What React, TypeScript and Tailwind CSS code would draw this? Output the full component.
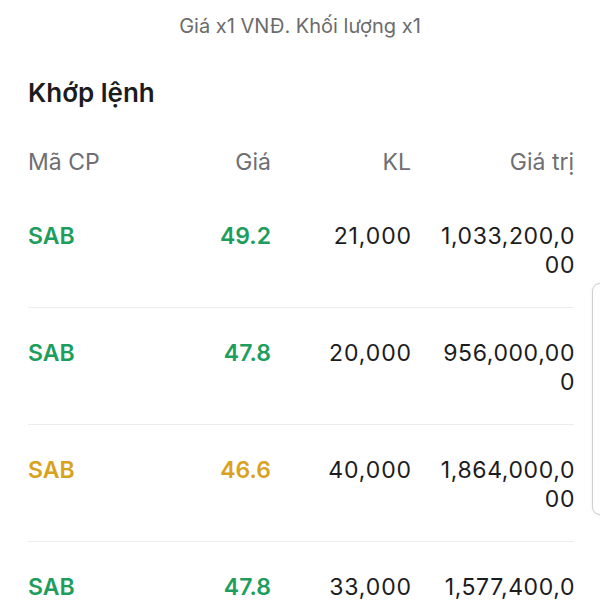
const rows = [
  { code: "SAB", price: "49.2", vol: "21,000", value: ["1,033,200,0", "00"], tone: "up" },
  { code: "SAB", price: "47.8", vol: "20,000", value: ["956,000,00", "0"], tone: "up" },
  { code: "SAB", price: "46.6", vol: "40,000", value: ["1,864,000,0", "00"], tone: "ref" },
  { code: "SAB", price: "47.8", vol: "33,000", value: ["1,577,400,0", "00"], tone: "up" },
];

const font = { fontFamily: "Inter, 'Noto Sans', sans-serif" };

export default function App() {
  return (
    <div className="relative w-[600px] h-[600px] overflow-hidden bg-white" style={font}>
      <p className="pt-[13px] text-center text-[20px] leading-[26px] text-[#6b6b6b]">
        Giá x1 VNĐ. Khối lượng x1
      </p>

      <div className="px-[28px] pr-[26px]">
        <h2 className="mt-[37px] text-[26px] leading-[34px] font-semibold text-[#1c1c1e]">
          Khớp lệnh
        </h2>

        <div className="mt-[38px] grid grid-cols-[1fr_100px_117px_140px] gap-x-[23px] pb-[14px] text-[23px] leading-[29px] text-[#6e6e73]">
          <span>Mã CP</span>
          <span className="text-right">Giá</span>
          <span className="text-right">KL</span>
          <span className="text-right">Giá trị</span>
        </div>

        {rows.map((r, i) => {
          const color = r.tone === "up" ? "text-[#1e9e5e]" : "text-[#d9a21e]";
          return (
            <div
              key={i}
              className="grid grid-cols-[1fr_100px_117px_140px] gap-x-[23px] pt-[31px] pb-[27px] border-b border-[#ececec] text-[23px] leading-[29px]"
            >
              <span className={`font-semibold ${color}`}>{r.code}</span>
              <span className={`text-right font-semibold ${color}`}>{r.price}</span>
              <span className="text-right text-[#1c1c1e] tracking-[0.9px] -mr-[1px]">{r.vol}</span>
              <span className="flex flex-col items-end text-[#1c1c1e] tracking-[0.6px] -mr-[1px]">
                <span>{r.value[0]}</span>
                <span>{r.value[1]}</span>
              </span>
            </div>
          );
        })}
      </div>

      {/* side handle overlay */}
      <div className="absolute left-[592px] top-[283px] w-[20px] h-[232px] rounded-l-[8px] border border-[#cfcfcf] bg-white shadow-[0_0_3px_rgba(0,0,0,0.08)]" />
    </div>
  );
}
